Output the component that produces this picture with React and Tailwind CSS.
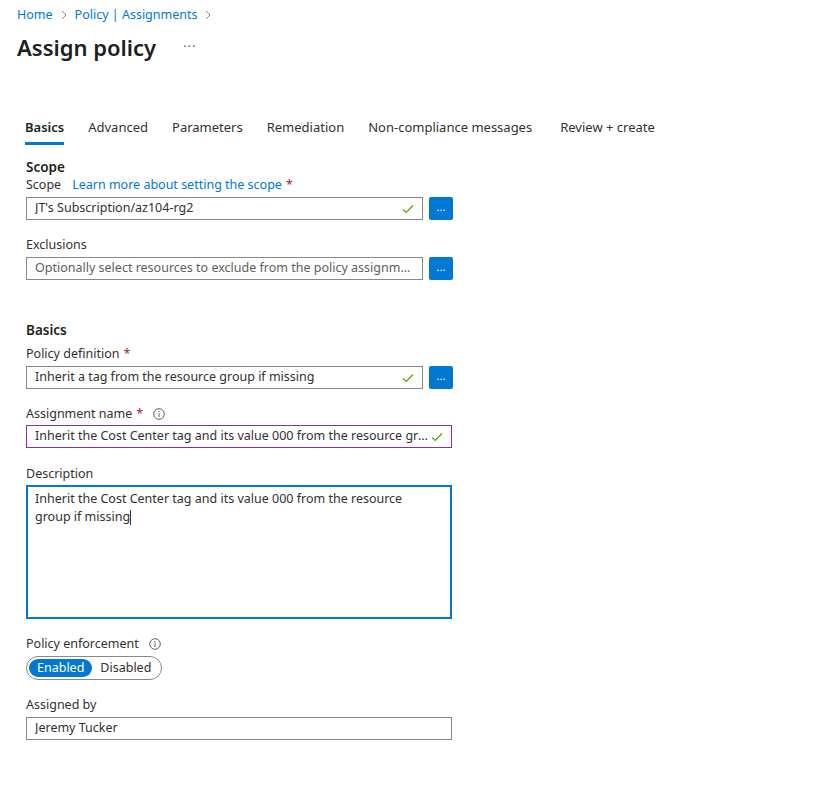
import React, { useState } from 'react';

const font = { fontFamily: '"Segoe UI", "Noto Sans", sans-serif' };

function Check() {
  return (
    <svg width="12" height="10" viewBox="0 0 12 10" className="shrink-0">
      <path d="M1 5.5 L4.2 8.5 L11 1.5" fill="none" stroke="#57a300" strokeWidth="1.2" />
    </svg>
  );
}

function Info() {
  return (
    <svg width="12" height="12" viewBox="0 0 12 12" className="shrink-0">
      <circle cx="6" cy="6" r="5.3" fill="none" stroke="#605e5c" strokeWidth="1" />
      <path d="M6 5.2 V9" stroke="#605e5c" strokeWidth="1" />
      <circle cx="6" cy="3.5" r="0.7" fill="#605e5c" />
    </svg>
  );
}

function Chevron() {
  return (
    <svg width="8" height="10" viewBox="0 0 8 10" className="mx-[7px]">
      <path d="M2 1 L6 5 L2 9" fill="none" stroke="#8a8886" strokeWidth="1" />
    </svg>
  );
}

function Req() {
  return <span className="text-[#a4262c] ml-1">*</span>;
}

function PickButton() {
  return (
    <button className="w-[24px] h-[23px] bg-[#0078d4] rounded-[2px] text-white text-[11px] leading-none flex items-center justify-center pb-[4px]">
      ...
    </button>
  );
}

function Field({ value, placeholder, check, border = 'border-[#8a8886]', full }) {
  return (
    <div className={`flex items-center h-[23px] border ${border} bg-white px-[8px] ${full ? 'w-[426px]' : 'w-[397px]'}`}>
      <span className={`flex-1 truncate text-[12.5px] ${value ? 'text-[#323130]' : 'text-[#605e5c]'}`}>
        {value || placeholder}
      </span>
      {check && <Check />}
    </div>
  );
}

export default function App() {
  const [enforce, setEnforce] = useState('Enabled');
  const tabs = ['Basics', 'Advanced', 'Parameters', 'Remediation', 'Non-compliance messages', 'Review + create'];

  return (
    <div className="w-[833px] h-[792px] bg-white text-[#323130]" style={font}>
      <div className="pl-[17px] pt-[5px]">
        <div className="flex items-center text-[12.5px] text-[#0078d4] h-[20px]">
          <span>Home</span>
          <Chevron />
          <span>Policy | Assignments</span>
          <Chevron />
        </div>
        <div className="flex items-center mt-[6px] h-[32px]">
          <h1 className="text-[22px] font-semibold text-[#201f1e]">Assign policy</h1>
          <span className="ml-[27px] text-[#605e5c] text-[13px] tracking-[1px]">···</span>
        </div>
      </div>

      <div className="flex pl-[25px] mt-[52px] gap-[24px] text-[13px]">
        {tabs.map((t, i) => (
          <div key={t} className={`flex flex-col ${i === 5 ? 'ml-[4px]' : ''}`}>
            <span className={`h-[24px] leading-[24px] ${i === 0 ? 'font-semibold text-[#201f1e]' : 'text-[#323130]'}`}>{t}</span>
            <div className={`h-[3px] mt-[3px] ${i === 0 ? 'bg-[#0078d4]' : ''}`} />
          </div>
        ))}
      </div>

      <div className="pl-[26px] pt-[12px] text-[12.5px]">
        <div className="font-semibold text-[13.5px] text-[#201f1e] leading-[20px]">Scope</div>
        <div className="leading-[18px] mt-[-1px]">
          Scope
          <span className="text-[#0078d4] ml-[11px]">Learn more about setting the scope</span>
          <Req />
        </div>
        <div className="flex gap-[6px] mt-[3px]">
          <Field value="JT's Subscription/az104-rg2" check />
          <PickButton />
        </div>

        <div className="mt-[16px] leading-[18px]">Exclusions</div>
        <div className="flex gap-[6px] mt-[3px]">
          <Field placeholder="Optionally select resources to exclude from the policy assignment" />
          <PickButton />
        </div>

        <div className="mt-[40px] font-semibold text-[13.5px] text-[#201f1e] leading-[20px]">Basics</div>
        <div className="mt-[5px] leading-[18px]">
          Policy definition
          <Req />
        </div>
        <div className="flex gap-[6px] mt-[3px]">
          <Field value="Inherit a tag from the resource group if missing" check />
          <PickButton />
        </div>

        <div className="mt-[16px] leading-[18px] flex items-center">
          Assignment name
          <Req />
          <span className="ml-[10px]"><Info /></span>
        </div>
        <div className="mt-[2px]">
          <Field
            value="Inherit the Cost Center tag and its value 000 from the resource group if missing"
            check
            full
            border="border-[#8a2da5]"
          />
        </div>

        <div className="mt-[17px] leading-[18px]">Description</div>
        <div className="mt-[2px] w-[426px] h-[134px] border-2 border-[#0078d4] px-[7px] py-[3px] text-[12.5px] leading-[18px] text-[#323130]">
          Inherit the Cost Center tag and its value 000 from the resource
          <br />
          group if missing<span className="inline-block w-[1px] h-[15px] bg-[#323130] align-middle" />
        </div>

        <div className="mt-[16px] leading-[18px] flex items-center">
          Policy enforcement
          <span className="ml-[10px]"><Info /></span>
        </div>
        <div className="mt-[3px] inline-flex items-center h-[24px] border border-[#8a8886] rounded-full p-[2px]">
          {['Enabled', 'Disabled'].map((o) => (
            <button
              key={o}
              onClick={() => setEnforce(o)}
              className={`h-[18px] px-[8px] rounded-full text-[12.5px] leading-[18px] ${enforce === o ? 'bg-[#0078d4] text-white' : 'text-[#323130]'}`}
            >
              {o}
            </button>
          ))}
        </div>

        <div className="mt-[16px] leading-[18px]">Assigned by</div>
        <div className="mt-[3px]">
          <Field value="Jeremy Tucker" full />
        </div>
      </div>
    </div>
  );
}
